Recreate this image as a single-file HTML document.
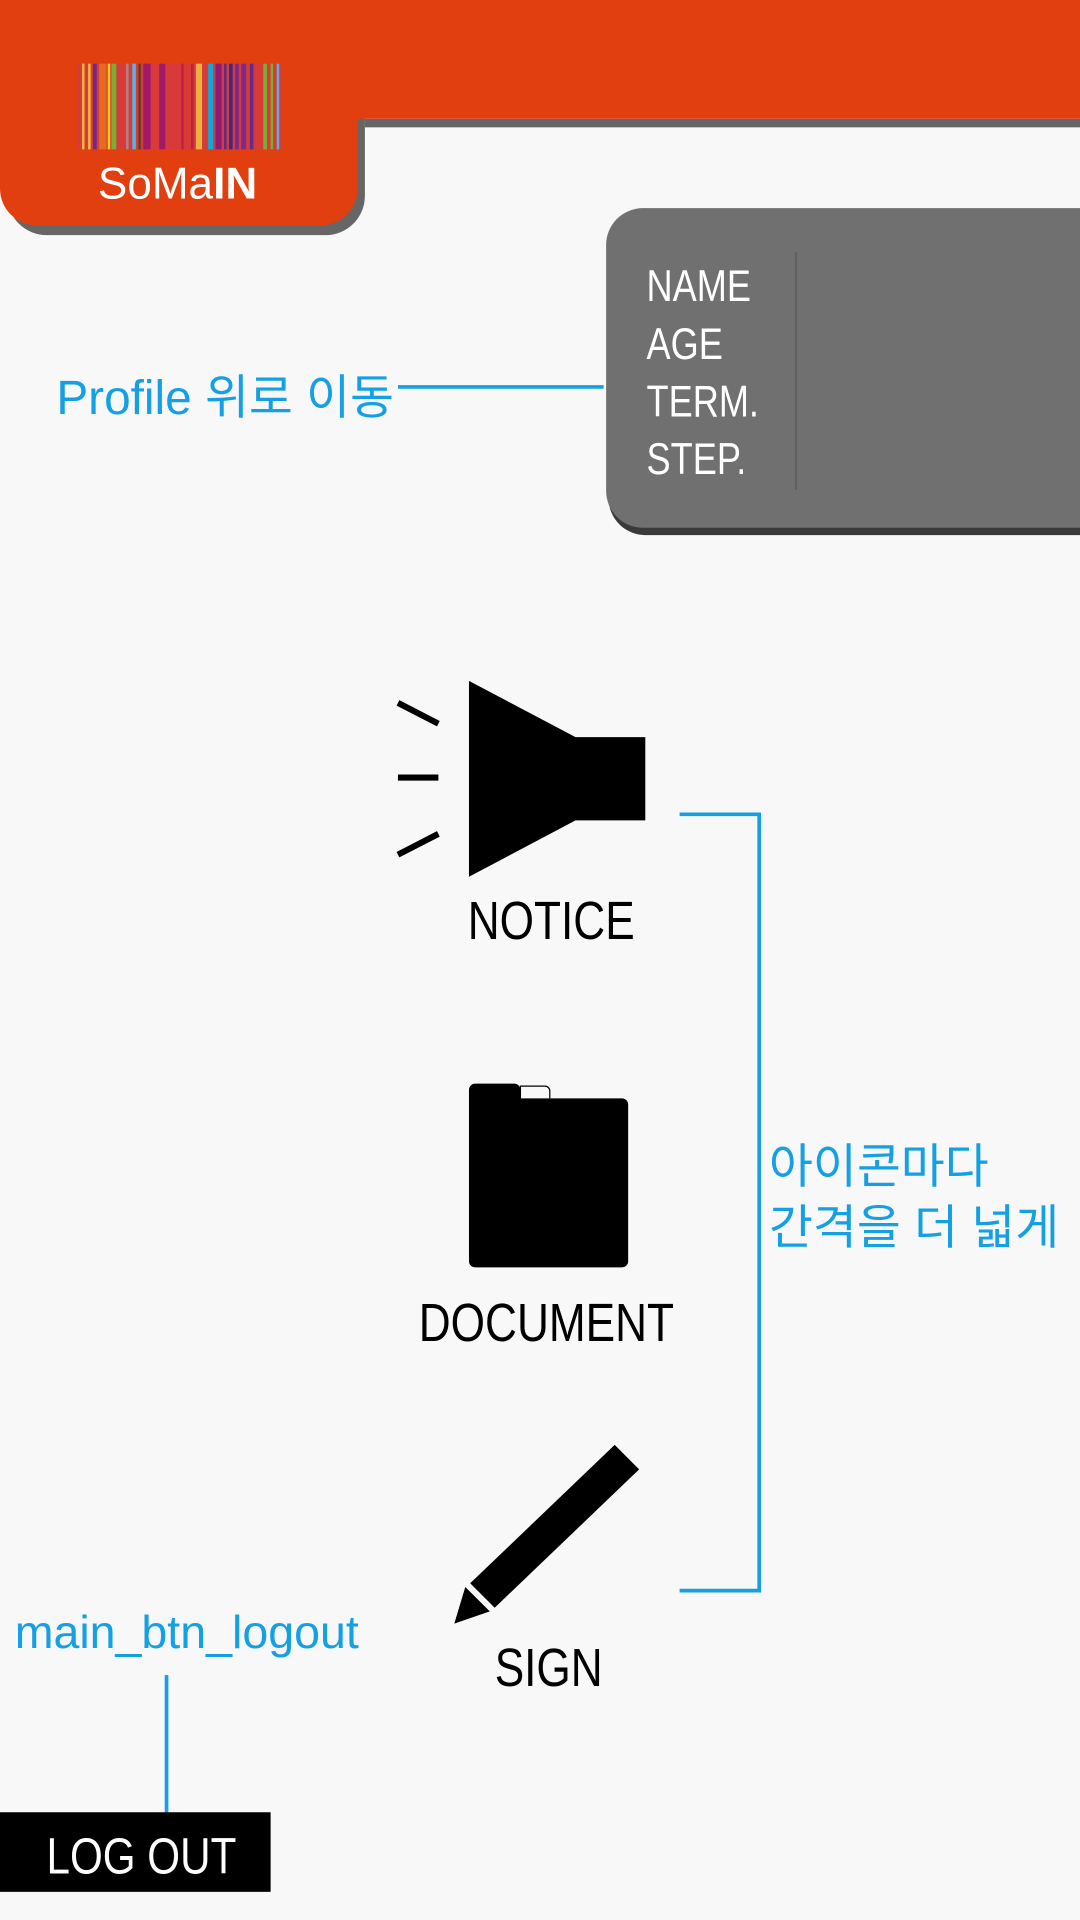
<!DOCTYPE html>
<html><head><meta charset="utf-8"><style>
html,body{margin:0;padding:0;background:#f8f8f8;overflow:hidden;width:1080px;height:1920px}
#w{position:absolute;left:0;top:0;width:882px;height:1568px;transform:scale(1.22449);transform-origin:0 0;font-family:"Liberation Sans","Noto Sans CJK KR",sans-serif}
.a{position:absolute}
.blue{color:#15a0e3}
.cond{display:inline-block;transform:scaleX(.82);transform-origin:0 0;white-space:nowrap}
</style></head><body><div id="w">
<svg class="a" style="left:0;top:0" width="882" height="1568">
<rect x="298" y="97" width="584" height="7" fill="#666"/>
<path d="M6 0H298V160a32 32 0 0 1-32 32H38a32 32 0 0 1-32-32Z" fill="#666"/>
<path d="M0 0H882V97H292V154a30 30 0 0 1-30 30H30a30 30 0 0 1-30-30Z" fill="#e23f10"/>
<g>
<rect x="63" y="52" width="167" height="70" fill="#d83a3a"/>
<rect x="67" y="52" width="2" height="70" fill="#f5b83a"/><rect x="72" y="52" width="2" height="70" fill="#f0c040"/><rect x="76" y="52" width="3" height="70" fill="#6a2a8a"/><rect x="81" y="52" width="6" height="70" fill="#e86a20"/><rect x="88" y="52" width="2" height="70" fill="#e8d020"/><rect x="91" y="52" width="4" height="70" fill="#78b030"/><rect x="103" y="52" width="2" height="70" fill="#aa8888"/><rect x="108" y="52" width="3" height="70" fill="#5ab0e0"/><rect x="113" y="52" width="2" height="70" fill="#604020"/><rect x="117" y="52" width="6" height="70" fill="#a01a6a"/><rect x="130" y="52" width="5" height="70" fill="#a01a6a"/><rect x="148" y="52" width="2" height="70" fill="#c02040"/><rect x="156" y="52" width="2" height="70" fill="#c02040"/><rect x="160" y="52" width="5" height="70" fill="#f0b040"/><rect x="170" y="52" width="4" height="70" fill="#10a8d8"/><rect x="176" y="52" width="5" height="70" fill="#8a1a7a"/><rect x="183" y="52" width="2" height="70" fill="#5a2a8a"/><rect x="187" y="52" width="3" height="70" fill="#3a2a8a"/><rect x="192" y="52" width="3" height="70" fill="#7a2a8a"/><rect x="197" y="52" width="4" height="70" fill="#7a2a8a"/><rect x="204" y="52" width="3" height="70" fill="#6a2a8a"/><rect x="215" y="52" width="3" height="70" fill="#78b030"/><rect x="221" y="52" width="2" height="70" fill="#78b030"/><rect x="226" y="52" width="2" height="70" fill="#5ab0e0"/>
</g>
<text x="145" y="162" text-anchor="middle" font-size="36" fill="#fff" font-family="Liberation Sans, sans-serif">SoMa<tspan font-weight="bold">IN</tspan></text>
<path d="M527 176H882V437H527a30 30 0 0 1-30-30V206a30 30 0 0 1 30-30Z" fill="#3a3a3a"/>
<path d="M525 170H882V431H525a30 30 0 0 1-30-30V200a30 30 0 0 1 30-30Z" fill="#707070"/>
<line x1="650" y1="206" x2="650" y2="400" stroke="#5e5e5e" stroke-width="1.5"/>
<line x1="325" y1="316" x2="493" y2="316" stroke="#15a0e3" stroke-width="3"/>
<path d="M555 665H620V1299H555" fill="none" stroke="#15a0e3" stroke-width="3"/>
<line x1="136" y1="1368" x2="136" y2="1485" stroke="#15a0e3" stroke-width="3"/>
<path d="M325 574L358 591M325 635H358M325 698L358 681" stroke="#000" stroke-width="5"/>
<path d="M383 556L470 602H527V670H470L383 716Z" fill="#000"/>
<path d="M383 890a5 5 0 0 1 5-5h32a5 5 0 0 1 5 5v7h83a5 5 0 0 1 5 5v128a5 5 0 0 1-5 5H388a5 5 0 0 1-5-5Z" fill="#000"/>
<path d="M425 897v-10h20a4 4 0 0 1 4 4v6" fill="none" stroke="#000" stroke-width="1"/>
<path d="M384 1293L502 1180L522 1200L404 1313Z" fill="#000"/>
<path d="M380 1296L400 1316L371 1326Z" fill="#000"/>
<rect x="0" y="1480" width="221" height="65" fill="#000"/>
</svg>
<div class="a" style="left:528px;top:210px;color:#fff;font-size:36px;line-height:47px"><span class="cond">NAME<br>AGE<br>TERM.<br>STEP.</span></div>
<div class="a blue" style="left:46px;top:294px;font-size:39px;white-space:nowrap">Profile 위로 이동</div>
<div class="a" style="left:382px;top:728px;font-size:44px"><span class="cond">NOTICE</span></div>
<div class="a" style="left:342px;top:1056px;font-size:44px"><span class="cond">DOCUMENT</span></div>
<div class="a" style="left:404px;top:1338px;font-size:44px"><span class="cond">SIGN</span></div>
<div class="a blue" style="left:628px;top:929px;font-size:39px;line-height:50px;white-space:nowrap">아이콘마다<br>간격을 더 넓게</div>
<div class="a blue" style="left:12px;top:1313px;font-size:38px;white-space:nowrap">main_btn_logout</div>
<div class="a" style="left:38px;top:1492px;font-size:42px;color:#fff"><span class="cond">LOG OUT</span></div>
</div></body></html>
